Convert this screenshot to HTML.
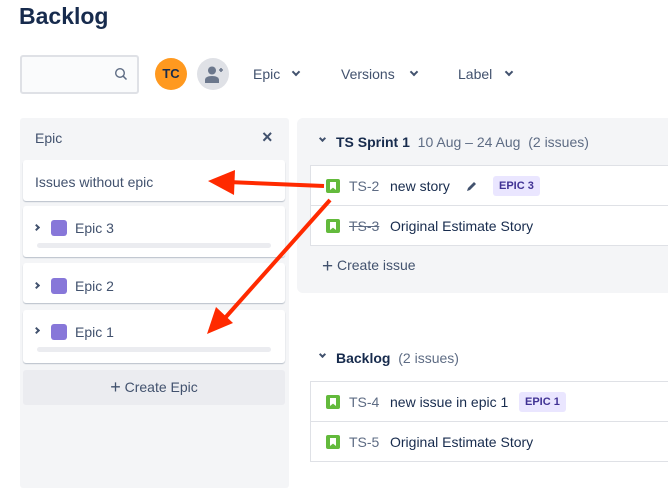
<!DOCTYPE html>
<html><head><meta charset="utf-8"><style>
*{box-sizing:border-box;margin:0;padding:0}
body{width:668px;height:477px;overflow:hidden;background:#fff;font-family:"Liberation Sans",sans-serif;color:#172b4d;position:relative;font-size:14px}
.a{position:absolute;white-space:nowrap}
.card{position:absolute;left:23px;width:262px;background:#fff;border-radius:3px;box-shadow:0 1px 1px rgba(9,30,66,.25)}
.bar{position:absolute;left:14px;right:14px;height:5px;background:#ebecf0;border-radius:3px}
.sq{position:absolute;width:16px;height:16px;background:#8777d9;border-radius:3px}
.row{position:absolute;left:310px;width:370px;height:41px;background:#fff;border:1px solid #dfe1e6}
.ic{position:absolute;left:15px;top:13px;width:14px;height:14px;background:#63ba3c;border-radius:2px}
.ic:after{content:"";position:absolute;left:4px;top:3px;width:6px;height:8px;background:#fff;clip-path:polygon(0 0,100% 0,100% 100%,50% 70%,0 100%)}
.chev{display:inline-block;width:6px;height:6px;border-right:2px solid #42526e;border-bottom:2px solid #42526e;transform:rotate(45deg)}
.gr{color:#5e6c84}
</style></head><body>
<div class="a" style="left:19px;top:3px;font-size:23px;font-weight:bold;color:#172b4d">Backlog</div>
<div class="a" style="left:20px;top:55px;width:119px;height:39px;border:2px solid #dfe1e6;border-radius:3px;background:#fafbfc"></div>
<svg class="a" style="left:114px;top:67px" width="14" height="14" viewBox="0 0 14 14"><circle cx="6" cy="6" r="4.3" fill="none" stroke="#5e6c84" stroke-width="1.4"/><path d="M9.2 9.2L12.5 12.5" stroke="#5e6c84" stroke-width="1.5"/></svg>
<div class="a" style="left:155px;top:58px;width:32px;height:32px;border-radius:50%;background:#ff991f;color:#172b4d;font-weight:bold;font-size:13px;text-align:center;line-height:32px">TC</div>
<div class="a" style="left:197px;top:58px;width:32px;height:32px;border-radius:50%;background:#dfe1e6"></div>
<svg class="a" style="left:197px;top:58px" width="32" height="32" viewBox="0 0 32 32"><circle cx="15" cy="12.5" r="4" fill="#6b778c"/><path d="M8 25v-3c0-2.5 2.5-4 7-4s7 1.5 7 4v3z" fill="#6b778c"/><path d="M22 12h4M24 10v4" stroke="#6b778c" stroke-width="1.6"/></svg>
<div class="a" style="left:253px;top:66px;color:#42526e">Epic</div><span class="a chev" style="left:293px;top:69px"></span>
<div class="a" style="left:341px;top:66px;color:#42526e">Versions</div><span class="a chev" style="left:411px;top:69px"></span>
<div class="a" style="left:458px;top:66px;color:#42526e">Label</div><span class="a chev" style="left:506px;top:69px"></span>

<div class="a" style="left:20px;top:118px;width:269px;height:370px;background:#f4f5f7;border-radius:3px"></div>
<div class="a" style="left:35px;top:130px;color:#42526e">Epic</div>
<div class="a" style="left:262px;top:127px;font-size:18px;color:#42526e;font-weight:bold">×</div>
<div class="card" style="top:160px;height:41px"><div class="a" style="left:12px;top:14px;color:#42526e">Issues without epic</div></div>
<div class="card" style="top:206px;height:51px"><span class="a chev" style="left:11px;top:19px;transform:rotate(-45deg);width:5px;height:5px"></span><div class="sq" style="left:28px;top:14px"></div><div class="a" style="left:52px;top:14px;color:#42526e">Epic 3</div><div class="bar" style="top:37px"></div></div>
<div class="card" style="top:263px;height:40px"><span class="a chev" style="left:11px;top:20px;transform:rotate(-45deg);width:5px;height:5px"></span><div class="sq" style="left:28px;top:15px"></div><div class="a" style="left:52px;top:15px;color:#42526e">Epic 2</div></div>
<div class="card" style="top:310px;height:53px"><span class="a chev" style="left:11px;top:18px;transform:rotate(-45deg);width:5px;height:5px"></span><div class="sq" style="left:28px;top:14px"></div><div class="a" style="left:52px;top:14px;color:#42526e">Epic 1</div><div class="bar" style="top:37px"></div></div>
<div class="a" style="left:23px;top:370px;width:262px;height:35px;background:#ebecf0;border-radius:3px;text-align:center;line-height:35px;color:#42526e"><span style="font-size:18px;vertical-align:-1px">+</span> Create Epic</div>

<div class="a" style="left:297px;top:118px;width:380px;height:175px;background:#f4f5f7;border-radius:6px"></div>
<span class="a chev" style="left:320px;top:136px;width:5px;height:5px"></span>
<div class="a" style="left:336px;top:134px"><b>TS Sprint 1</b> <span class="gr">&nbsp;10 Aug – 24 Aug &nbsp;(2 issues)</span></div>
<div class="row" style="top:165px"><div class="ic"></div><div class="a gr" style="left:38px;top:12px">TS-2</div><div class="a" style="left:79px;top:12px">new story</div>
<svg class="a" style="left:155px;top:14px" width="12" height="12" viewBox="0 0 12 12"><path d="M1 11l1-3 6-6 2 2-6 6z" fill="#42526e"/></svg>
<div class="a" style="left:182px;top:10px;height:20px;padding:0 6px;background:#eae6ff;border-radius:3px;color:#403294;font-weight:bold;font-size:11px;line-height:20px">EPIC 3</div></div>
<div class="row" style="top:205px"><div class="ic"></div><div class="a gr" style="left:38px;top:12px;text-decoration:line-through">TS-3</div><div class="a" style="left:79px;top:12px">Original Estimate Story</div></div>
<div class="a" style="left:322px;top:256px;color:#42526e"><span style="font-size:19px;vertical-align:-2px">+</span> Create issue</div>

<span class="a chev" style="left:320px;top:352px;width:5px;height:5px"></span>
<div class="a" style="left:336px;top:350px"><b>Backlog</b> <span class="gr">&nbsp;(2 issues)</span></div>
<div class="row" style="top:381px"><div class="ic"></div><div class="a gr" style="left:38px;top:12px">TS-4</div><div class="a" style="left:79px;top:12px">new issue in epic 1</div>
<div class="a" style="left:208px;top:10px;height:20px;padding:0 6px;background:#eae6ff;border-radius:3px;color:#403294;font-weight:bold;font-size:11px;line-height:20px">EPIC 1</div></div>
<div class="row" style="top:421px"><div class="ic"></div><div class="a gr" style="left:38px;top:12px">TS-5</div><div class="a" style="left:79px;top:12px">Original Estimate Story</div></div>

<svg class="a" style="left:0;top:0" width="668" height="477"><g fill="#ff2a00" stroke="#ff2a00">
<path d="M324 186L228 182" stroke-width="4"/><path d="M208 181L235 170L234 195z" stroke="none"/>
<path d="M330 200L225 318" stroke-width="4"/><path d="M207 334L216 307L233 323z" stroke="none"/></g></svg>
</body></html>
